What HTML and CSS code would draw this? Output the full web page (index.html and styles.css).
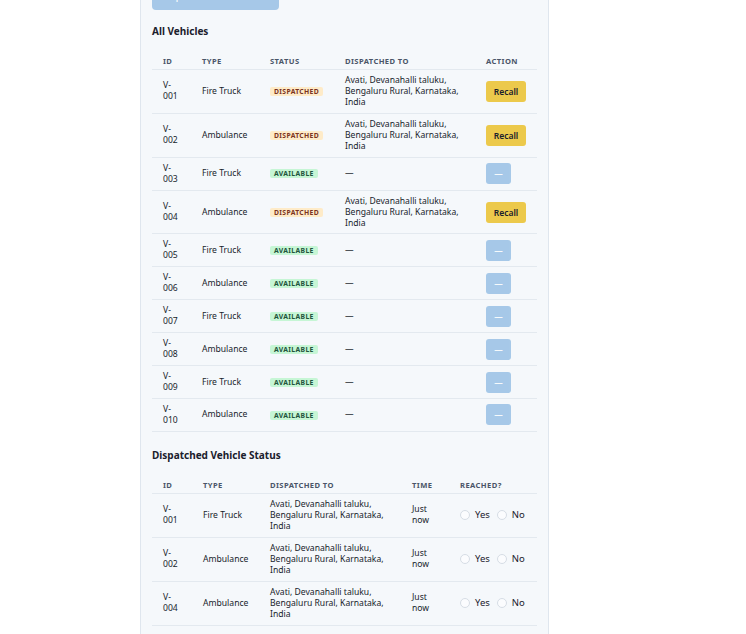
FILE: index.html
```html
<!DOCTYPE html>
<html lang="en">
<head>
<meta charset="utf-8">
<title>Vehicles</title>
<link rel="stylesheet" href="styles.css">
</head>
<body>
<div class="panel">
  <button class="btn-dispatch" disabled>Dispatch Selected Vehicle</button>

  <h2 class="section-title">All Vehicles</h2>
  <table class="vtable vehicles">
    <colgroup>
      <col class="c-id"><col class="c-type"><col class="c-status"><col class="c-dest"><col class="c-action">
    </colgroup>
    <thead>
      <tr><th>ID</th><th>Type</th><th>Status</th><th>Dispatched To</th><th>Action</th></tr>
    </thead>
    <tbody>
      <tr><td>V-001</td><td>Fire Truck</td><td><span class="badge dispatched">Dispatched</span></td><td>Avati, Devanahalli taluku, Bengaluru Rural, Karnataka, India</td><td><button class="btn-recall">Recall</button></td></tr>
      <tr><td>V-002</td><td>Ambulance</td><td><span class="badge dispatched">Dispatched</span></td><td>Avati, Devanahalli taluku, Bengaluru Rural, Karnataka, India</td><td><button class="btn-recall">Recall</button></td></tr>
      <tr><td>V-003</td><td>Fire Truck</td><td><span class="badge available">Available</span></td><td>—</td><td><button class="btn-none" disabled>—</button></td></tr>
      <tr><td>V-004</td><td>Ambulance</td><td><span class="badge dispatched">Dispatched</span></td><td>Avati, Devanahalli taluku, Bengaluru Rural, Karnataka, India</td><td><button class="btn-recall">Recall</button></td></tr>
      <tr><td>V-005</td><td>Fire Truck</td><td><span class="badge available">Available</span></td><td>—</td><td><button class="btn-none" disabled>—</button></td></tr>
      <tr><td>V-006</td><td>Ambulance</td><td><span class="badge available">Available</span></td><td>—</td><td><button class="btn-none" disabled>—</button></td></tr>
      <tr><td>V-007</td><td>Fire Truck</td><td><span class="badge available">Available</span></td><td>—</td><td><button class="btn-none" disabled>—</button></td></tr>
      <tr><td>V-008</td><td>Ambulance</td><td><span class="badge available">Available</span></td><td>—</td><td><button class="btn-none" disabled>—</button></td></tr>
      <tr><td>V-009</td><td>Fire Truck</td><td><span class="badge available">Available</span></td><td>—</td><td><button class="btn-none" disabled>—</button></td></tr>
      <tr><td>V-010</td><td>Ambulance</td><td><span class="badge available">Available</span></td><td>—</td><td><button class="btn-none" disabled>—</button></td></tr>
    </tbody>
  </table>

  <h2 class="section-title second">Dispatched Vehicle Status</h2>
  <table class="vtable status">
    <colgroup>
      <col class="s-id"><col class="s-type"><col class="s-dest"><col class="s-time"><col class="s-reached">
    </colgroup>
    <thead>
      <tr><th>ID</th><th>Type</th><th>Dispatched To</th><th>Time</th><th>Reached?</th></tr>
    </thead>
    <tbody>
      <tr><td>V-001</td><td>Fire Truck</td><td>Avati, Devanahalli taluku, Bengaluru Rural, Karnataka, India</td><td>Just now</td>
        <td><div class="reached"><label class="opt"><input type="radio" name="r1"><span>Yes</span></label><label class="opt"><input type="radio" name="r1"><span>No</span></label></div></td></tr>
      <tr><td>V-002</td><td>Ambulance</td><td>Avati, Devanahalli taluku, Bengaluru Rural, Karnataka, India</td><td>Just now</td>
        <td><div class="reached"><label class="opt"><input type="radio" name="r2"><span>Yes</span></label><label class="opt"><input type="radio" name="r2"><span>No</span></label></div></td></tr>
      <tr><td>V-004</td><td>Ambulance</td><td>Avati, Devanahalli taluku, Bengaluru Rural, Karnataka, India</td><td>Just now</td>
        <td><div class="reached"><label class="opt"><input type="radio" name="r4"><span>Yes</span></label><label class="opt"><input type="radio" name="r4"><span>No</span></label></div></td></tr>
    </tbody>
  </table>
</div>
</body>
</html>
```

FILE: styles.css
```css
* { box-sizing: border-box; }

html, body {
  margin: 0;
  padding: 0;
  background: #ffffff;
}

body {
  font-family: "Noto Sans", "Open Sans", sans-serif;
  color: #1a202c;
  overflow: hidden;
}

.panel {
  width: 409px;
  margin: -33px 0 0 140px;
  padding: 16px 11px 40px;
  background: #f5f8fb;
  border: 1px solid #dfe6ee;
  min-height: 700px;
}

.btn-dispatch {
  display: block;
  height: 26px;
  padding: 0 11px 1px;
  border: none;
  border-radius: 4px;
  background: #3182ce;
  opacity: 0.4;
  color: #ffffff;
  font-family: inherit;
  font-size: 8.5px;
  font-weight: 600;
  line-height: 11px;
}

.section-title {
  margin: 14px 0 13px;
  font-size: 10px;
  line-height: 14px;
  font-weight: 700;
  color: #1a202c;
}

.section-title.second {
  margin-top: 16px;
}

.vtable {
  width: 385px;
  table-layout: fixed;
  border-collapse: separate;
  border-spacing: 0;
}

.vtable th {
  padding: 5px 11px 3px;
  font-size: 7.6px;
  line-height: 10px;
  font-weight: 700;
  letter-spacing: 0.4px;
  text-transform: uppercase;
  color: #4a5568;
  text-align: left;
  border-bottom: 1px solid #e3e9ef;
  white-space: nowrap;
}

.vtable td {
  padding: 5px 11px;
  font-size: 8.6px;
  line-height: 10.95px;
  vertical-align: middle;
  text-align: left;
  border-bottom: 1px solid #e3e9ef;
  color: #171d2b;
}

.c-id { width: 39px; }
.c-type { width: 68px; }
.c-status { width: 75px; }
.c-dest { width: 141px; }
.c-action { width: 62px; }

.s-id { width: 40px; }
.s-type { width: 67px; }
.s-dest { width: 142px; }
.s-time { width: 48px; }
.s-reached { width: 88px; }

.vtable td:nth-child(2) { white-space: nowrap; }

.badge {
  display: inline-block;
  padding: 0 4px;
  font-size: 6.8px;
  line-height: 9px;
  font-weight: 700;
  letter-spacing: 0.35px;
  text-transform: uppercase;
  border-radius: 2px;
  vertical-align: middle;
}

.badge.dispatched {
  background: #feebc8;
  color: #7b341e;
}

.badge.available {
  background: #c6f6d5;
  color: #22543d;
}

.btn-recall,
.btn-none {
  display: block;
  height: 21px;
  border: none;
  border-radius: 3px;
  font-family: inherit;
  font-size: 8.5px;
  line-height: 11px;
  font-weight: 600;
}

.btn-recall {
  padding: 0 7px;
  width: 40px;
  background: #ecc94b;
  color: #1a202c;
}

.btn-none {
  width: 25px;
  padding: 0;
  background: #3182ce;
  opacity: 0.4;
  color: #ffffff;
}

.reached {
  display: flex;
  align-items: center;
  gap: 7px;
}

.opt {
  display: flex;
  align-items: center;
  gap: 5px;
  font-size: 9.5px;
  line-height: 12px;
  color: #1a202c;
}

.opt input {
  appearance: none;
  -webkit-appearance: none;
  margin: 0;
  width: 10px;
  height: 10px;
  border: 1px solid #d6dde5;
  border-radius: 50%;
  background: #fbfcfe;
}
```
